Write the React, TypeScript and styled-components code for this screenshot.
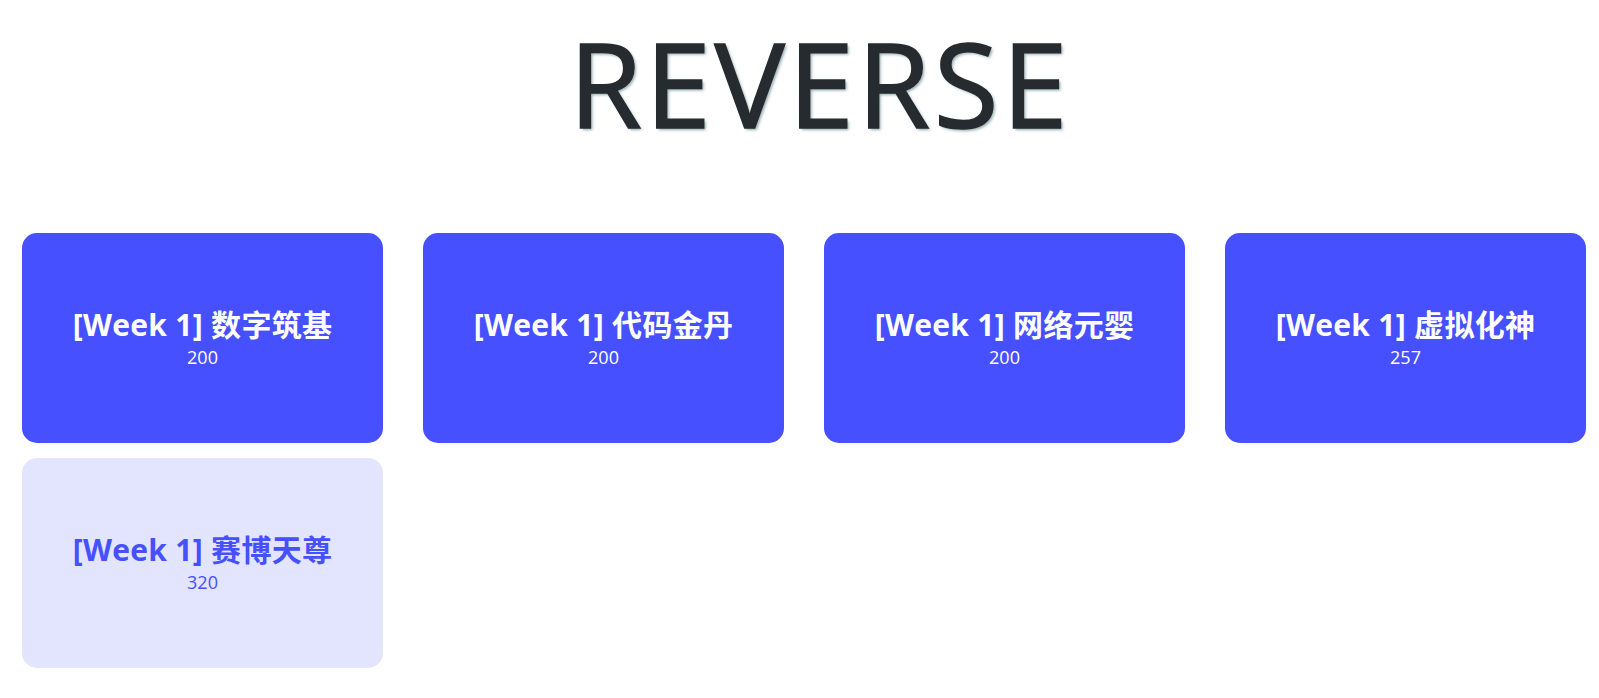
import React from "react";
import styled, { createGlobalStyle } from "styled-components";

const Global = createGlobalStyle`
  html, body { margin: 0; padding: 0; background: #ffffff; }
  body { font-family: "Open Sans", "Noto Sans CJK SC", sans-serif; }
`;

const Page = styled.div`
  display: flex;
  flex-direction: column;
  padding: 24px 13px 0 22px;
`;

const Title = styled.h1`
  margin: 0;
  padding-left: 32px;
  text-align: center;
  font-family: "Open Sans", sans-serif;
  font-weight: 400;
  font-size: 118px;
  line-height: 118px;
  letter-spacing: 3.5px;
  color: #262b30;
  -webkit-text-stroke: 1.6px #262b30;
  text-shadow: 2px 2px 3px rgba(20, 70, 80, 0.45);
`;

const Grid = styled.div`
  margin-top: 91px;
  display: grid;
  grid-template-columns: repeat(4, 1fr);
  column-gap: 40px;
  row-gap: 15px;
`;

const Card = styled.div<{ $solved?: boolean }>`
  height: 210px;
  border-radius: 15px;
  background: ${(p) => (p.$solved ? "#e3e4fd" : "#4650ff")};
  color: ${(p) => (p.$solved ? "#4650ff" : "#ffffff")};
  display: flex;
  flex-direction: column;
  align-items: center;
  justify-content: center;
  text-align: center;
`;

const CardTitle = styled.div`
  font-family: "Open Sans", "Noto Sans CJK SC", sans-serif;
  font-weight: 700;
  font-size: 30px;
  line-height: 38px;
  letter-spacing: 0.3px;
`;

const Points = styled.div`
  font-family: "Open Sans", "Noto Sans CJK SC", sans-serif;
  font-size: 18px;
  line-height: 26px;
`;

const challenges = [
  { name: "[Week 1] 数字筑基", points: 200, solved: false },
  { name: "[Week 1] 代码金丹", points: 200, solved: false },
  { name: "[Week 1] 网络元婴", points: 200, solved: false },
  { name: "[Week 1] 虚拟化神", points: 257, solved: false },
  { name: "[Week 1] 赛博天尊", points: 320, solved: true },
];

export default function App() {
  return (
    <>
      <Global />
      <Page>
        <Title>REVERSE</Title>
        <Grid>
          {challenges.map((c) => (
            <Card key={c.name} $solved={c.solved}>
              <CardTitle>{c.name}</CardTitle>
              <Points>{c.points}</Points>
            </Card>
          ))}
        </Grid>
      </Page>
    </>
  );
}
